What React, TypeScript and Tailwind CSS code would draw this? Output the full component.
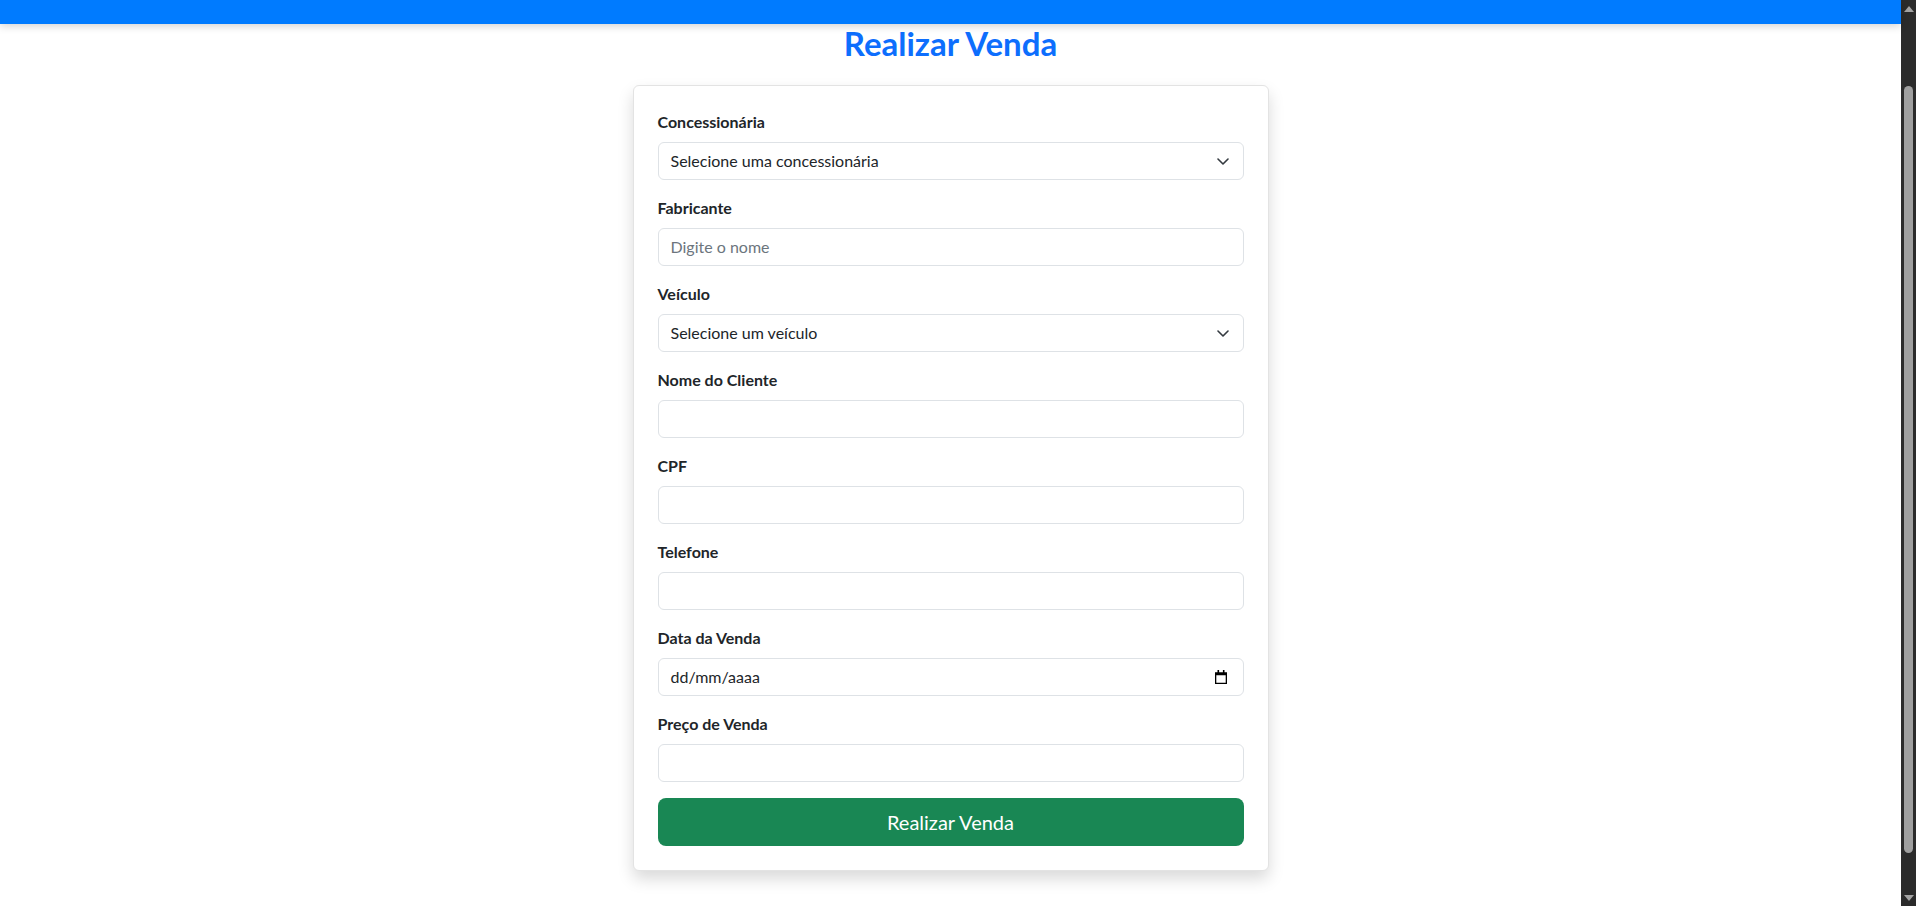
import React from "react";

const font = { fontFamily: '"Segoe UI", Lato, sans-serif' };

function Chevron() {
  return (
    <svg width="12" height="7" viewBox="0 0 12 7" fill="none" className="mr-[2px]">
      <path d="M1 1l5 5 5-5" stroke="#343a40" strokeWidth="1.6" strokeLinecap="round" strokeLinejoin="round" />
    </svg>
  );
}

function CalendarIcon() {
  return (
    <svg width="12" height="14" viewBox="0 0 12 14" className="mr-[4px]">
      <rect x="2.5" y="0" width="1.6" height="3" fill="#000" />
      <rect x="7.9" y="0" width="1.6" height="3" fill="#000" />
      <path d="M0 2.2h12v11.8H0z M1.3 5.2v7.5h9.4V5.2z" fill="#000" fillRule="evenodd" />
    </svg>
  );
}

function Label({ children }: { children: React.ReactNode }) {
  return <label className="block mb-2 text-[16px] leading-6 font-bold text-[#212529]">{children}</label>;
}

const box =
  "h-[38px] w-full rounded-[6px] border border-[#dee2e6] bg-white px-3 text-[16px] leading-6 text-[#212529] flex items-center";

function Field({ label, children }: { label: string; children?: React.ReactNode }) {
  return (
    <div className="mb-4">
      <Label>{label}</Label>
      {children ?? <div className={box} />}
    </div>
  );
}

export default function App() {
  return (
    <div className="flex h-[906px] w-full overflow-hidden bg-white" style={font}>
      <div className="flex-1 flex flex-col">
        <div className="h-6 bg-[#007bff] shadow-[0_2px_8px_rgba(0,0,0,0.18)] relative z-10" />
        <h2 className="text-center text-[33px] leading-[38px] font-bold text-[#0d6efd] mt-0 mb-[23px]">
          Realizar Venda
        </h2>
        <div className="mx-auto w-[636px] rounded-[6px] border border-[#e3e3e3] bg-white p-6 pb-6 shadow-[0_8px_16px_rgba(0,0,0,0.15)]">
          <Field label="Concessionária">
            <div className={box + " justify-between"}>
              <span>Selecione uma concessionária</span>
              <Chevron />
            </div>
          </Field>
          <Field label="Fabricante">
            <div className={box}>
              <span className="text-[#6c757d]">Digite o nome</span>
            </div>
          </Field>
          <Field label="Veículo">
            <div className={box + " justify-between"}>
              <span>Selecione um veículo</span>
              <Chevron />
            </div>
          </Field>
          <Field label="Nome do Cliente" />
          <Field label="CPF" />
          <Field label="Telefone" />
          <Field label="Data da Venda">
            <div className={box + " justify-between"}>
              <span>dd/mm/aaaa</span>
              <CalendarIcon />
            </div>
          </Field>
          <Field label="Preço de Venda" />
          <button className="w-full h-12 rounded-[8px] bg-[#198754] text-white text-[20px] leading-[30px]">
            Realizar Venda
          </button>
        </div>
      </div>
      <div className="w-[15px] h-full bg-[#2b2b2b] flex flex-col items-center">
        <div className="h-[17px] flex items-center justify-center">
          <svg width="10" height="6" viewBox="0 0 10 6">
            <path d="M5 0 10 6H0z" fill="#a3a3a3" />
          </svg>
        </div>
        <div className="mt-[69px] w-[9px] h-[767px] rounded-[5px] bg-[#9f9f9f]" />
        <div className="flex-1" />
        <div className="h-[17px] flex items-center justify-center">
          <svg width="10" height="6" viewBox="0 0 10 6">
            <path d="M0 0h10L5 6z" fill="#a3a3a3" />
          </svg>
        </div>
      </div>
    </div>
  );
}
